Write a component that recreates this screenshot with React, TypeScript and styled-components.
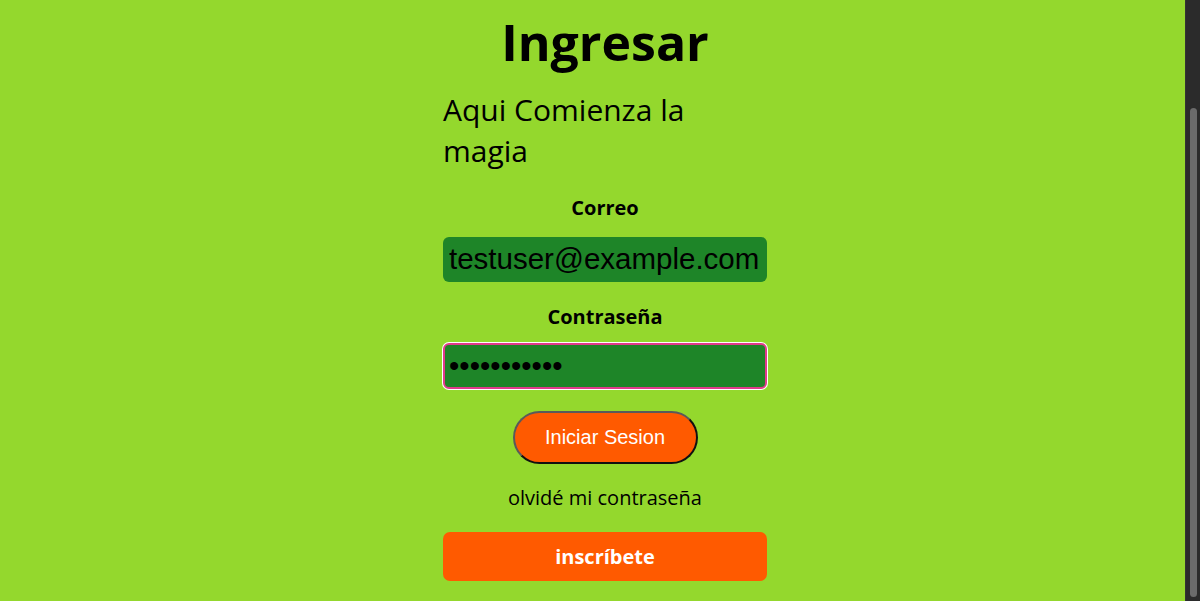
import React from "react";
import styled, { createGlobalStyle } from "styled-components";

const GlobalStyle = createGlobalStyle`
  html, body {
    margin: 0;
    padding: 0;
    height: 100%;
    overflow: hidden;
    background: #94d82d;
  }
  #root { height: 100%; }
`;

const Shell = styled.div`
  height: 100vh;
  display: flex;
  background: #94d82d;
  font-family: "Open Sans", "Liberation Sans", sans-serif;
  color: #000;
`;

const Main = styled.main`
  flex: 1;
  min-width: 0;
  overflow: hidden;
  display: flex;
  justify-content: center;
  align-items: flex-start;
  padding: 7.5px 0 0 25px;
`;

const ScrollRail = styled.div`
  box-sizing: border-box;
  width: 15px;
  flex-shrink: 0;
  display: flex;
  flex-direction: column;
  padding: 108px 3px 4px 4px;
  background: #2b2b2b;
  border-left: 1px solid #333333;
`;

const ScrollThumb = styled.div`
  flex: 1;
  border-radius: 4px;
  background: #6b6b6b;
`;

const Column = styled.form`
  width: 324px;
  display: flex;
  flex-direction: column;
  align-items: center;
`;

const Title = styled.h1`
  margin: 0;
  font-size: 50px;
  font-weight: 700;
  line-height: 69.5px;
  text-align: center;
`;

const Subtitle = styled.p`
  align-self: stretch;
  margin: 12px 0 0;
  font-size: 30px;
  font-weight: 400;
  line-height: normal;
  text-align: left;
`;

const Label = styled.label<{ $gap: number }>`
  margin-top: ${(p) => p.$gap}px;
  font-size: 20px;
  font-weight: 700;
  line-height: normal;
`;

const Field = styled.input<{ $focused?: boolean; $gap: number }>`
  box-sizing: border-box;
  align-self: stretch;
  margin: ${(p) => p.$gap}px 0 0;
  height: ${(p) => (p.$focused ? 46 : 45)}px;
  padding: 0 ${(p) => (p.$focused ? 4 : 6)}px;
  border: ${(p) => (p.$focused ? "2px solid #e13a8b" : "none")};
  box-shadow: ${(p) => (p.$focused ? "0 0 0 1px #ffffff" : "none")};
  border-radius: 6px;
  background: #1e8528;
  color: #000;
  font-family: "Liberation Sans", Arial, sans-serif;
  font-size: 29.5px;
  outline: none;
`;

const SessionButton = styled.button`
  box-sizing: border-box;
  margin-top: 22px;
  width: 185px;
  height: 53px;
  border-radius: 27px;
  border: 2px solid;
  border-color: #5a5a5a #111111 #111111 #5a5a5a;
  background: #ff5a00;
  color: #ffffff;
  font-family: "Liberation Sans", Arial, sans-serif;
  font-size: 20px;
  cursor: pointer;
`;

const Forgot = styled.a`
  margin-top: 19.6px;
  font-size: 20px;
  line-height: normal;
  color: #000;
  text-decoration: none;
`;

const SignUp = styled.button`
  box-sizing: border-box;
  align-self: stretch;
  margin-top: 21.5px;
  height: 49px;
  border: none;
  border-radius: 7px;
  background: #ff5a00;
  color: #ffffff;
  font-family: "Open Sans", "Liberation Sans", sans-serif;
  font-size: 20px;
  font-weight: 700;
  cursor: pointer;
`;

export default function App() {
  return (
    <>
      <GlobalStyle />
      <Shell>
        <Main>
          <Column onSubmit={(e) => e.preventDefault()}>
            <Title>Ingresar</Title>
            <Subtitle>Aqui Comienza la magia</Subtitle>
            <Label $gap={23.4} htmlFor="correo">Correo</Label>
            <Field
              id="correo"
              $gap={15.2}
              type="email"
              defaultValue="testuser@example.com"
            />
            <Label $gap={21.6} htmlFor="clave">Contraseña</Label>
            <Field
              id="clave"
              $gap={13.2}
              $focused
              type="password"
              defaultValue="testpass123"
            />
            <SessionButton type="submit">Iniciar Sesion</SessionButton>
            <Forgot href="#">olvidé mi contraseña</Forgot>
            <SignUp type="button">inscríbete</SignUp>
          </Column>
        </Main>
        <ScrollRail aria-hidden="true">
          <ScrollThumb />
        </ScrollRail>
      </Shell>
    </>
  );
}
